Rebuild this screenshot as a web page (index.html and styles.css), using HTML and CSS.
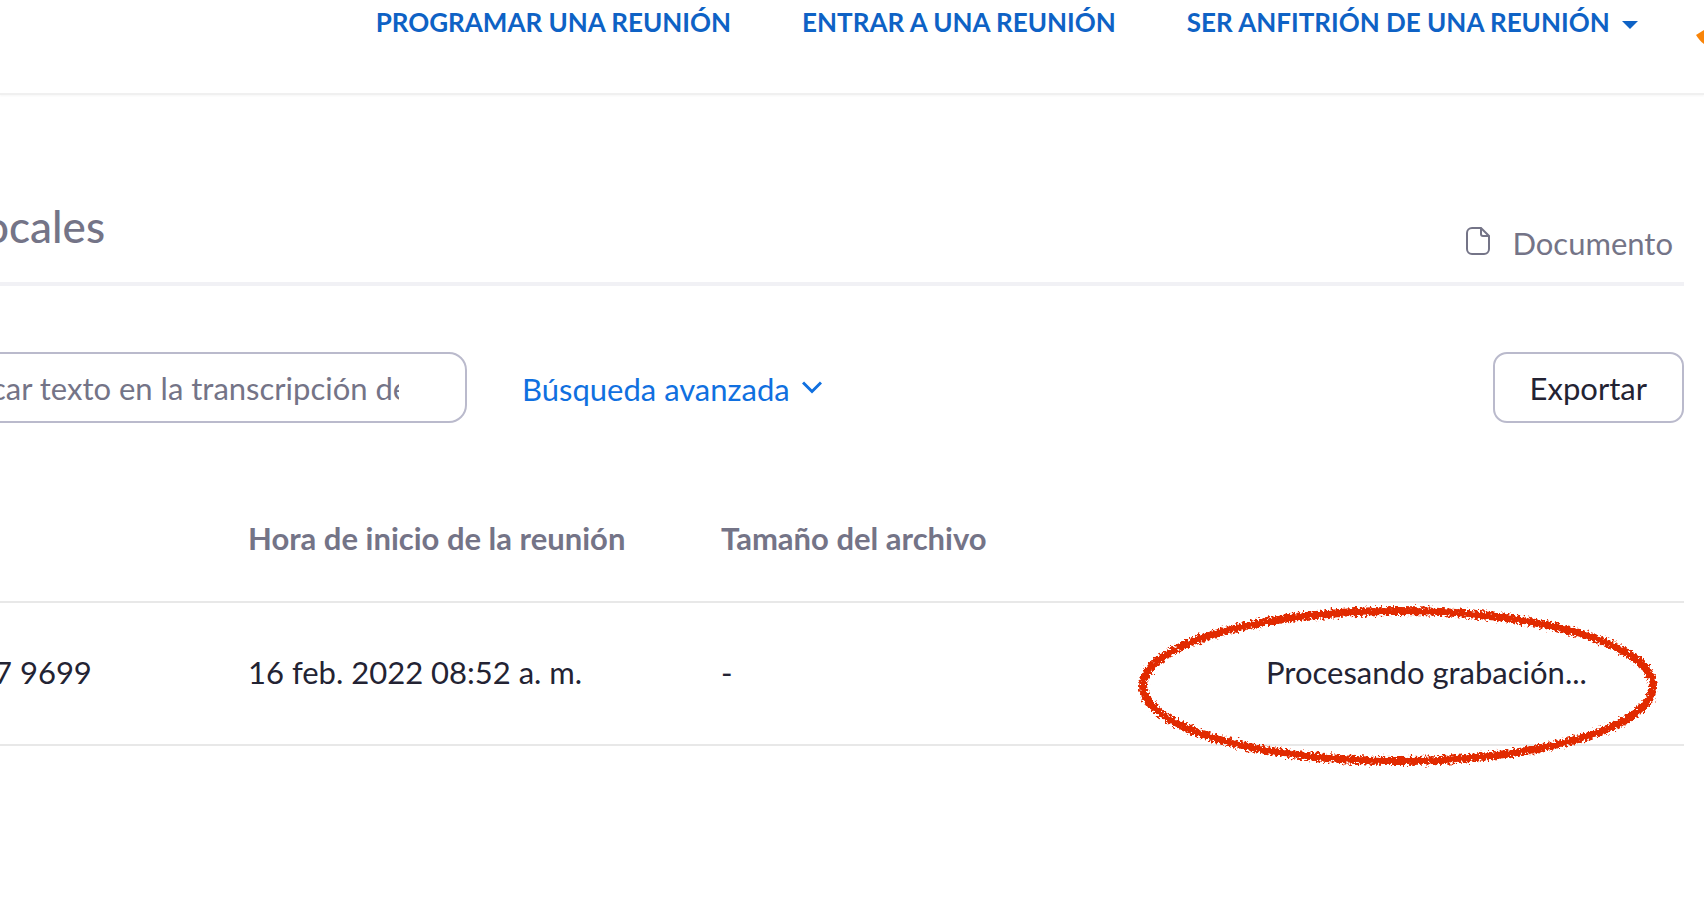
FILE: index.html
```html
<!DOCTYPE html>
<html lang="es">
<head>
<meta charset="utf-8">
<title>Grabaciones</title>
<link rel="stylesheet" href="styles.css">
</head>
<body>
<header class="header">
  <nav class="nav">
    <a class="nav-link" href="#">PROGRAMAR UNA REUNIÓN</a>
    <a class="nav-link" href="#">ENTRAR A UNA REUNIÓN</a>
    <a class="nav-link" href="#">SER ANFITRIÓN DE UNA REUNIÓN
      <svg class="caret" viewBox="0 0 16 8" aria-hidden="true"><path d="M0 0h16L8 8z"/></svg>
    </a>
  </nav>
  <svg class="avatar" viewBox="0 0 8 16" aria-hidden="true"><path d="M8 1L0 6C2 9.500 5 13 8 15z"/></svg>
</header>
<main class="main">
  <div class="title-row">
    <h1 class="title">ocales</h1>
    <a class="doc-link" href="#">
      <svg class="doc-icon" viewBox="0 0 24 28" aria-hidden="true"><path d="M6 1H15L23 9V22a5 5 0 0 1-5 5H6a5 5 0 0 1-5-5V6a5 5 0 0 1 5-5zM15 1V7a2 2 0 0 0 2 2H23"/></svg>
      <span>Documento</span>
    </a>
  </div>
  <div class="toolbar">
    <input class="search" type="text" aria-label="Buscar texto" placeholder="car texto en la transcripción de">
    <a class="advanced" href="#">Búsqueda avanzada
      <svg class="chevron" viewBox="0 0 20 13" aria-hidden="true"><path d="M1 1.500L10 10.500L19 1.500"/></svg>
    </a>
    <button class="export" type="button">Exportar</button>
  </div>
  <table class="table">
    <colgroup><col class="col-id"><col class="col-time"><col><col class="col-state"></colgroup>
    <thead>
      <tr><th></th><th>Hora de inicio de la reunión</th><th>Tamaño del archivo</th><th></th></tr>
    </thead>
    <tbody>
      <tr>
        <td><span class="meeting-id">7 9699</span></td>
        <td>16 feb. 2022 08:52 a. m.</td>
        <td>-</td>
        <td class="state">Procesando grabación...
          <svg class="mark" viewBox="0 0 520 164" aria-hidden="true">
            <defs>
              <filter id="crayon" x="-5%" y="-10%" width="110%" height="120%">
                <feTurbulence type="fractalNoise" baseFrequency="0.4" numOctaves="3" seed="4" result="n"/>
                <feDisplacementMap in="SourceGraphic" in2="n" scale="9" xChannelSelector="R" yChannelSelector="G"/>
              </filter>
            </defs>
            <ellipse cx="260" cy="82" rx="255" ry="75" filter="url(#crayon)"/>
          </svg>
        </td>
      </tr>
    </tbody>
  </table>
</main>
</body>
</html>
```
FILE: styles.css
```css
* { box-sizing: border-box; }
body {
  min-height: 100vh;
  margin: 0;
  background: #fff;
  color: #232333;
  font: 31px/40px Lato, "Open Sans", sans-serif;
}
a { text-decoration: none; }
svg { fill: none; }
.header {
  display: flex;
  justify-content: flex-end;
  height: 95px;
  border-bottom: 2px solid #f0f0f0;
  box-shadow: 0 1px 2px #f6f6f6;
}
.nav { display: flex; gap: 71px; padding: 4px 58px 0 0; }
.nav-link {
  color: #0e62c5;
  font-size: 26px;
  line-height: 36px;
  font-weight: 700;
  white-space: nowrap;
}
.caret { width: 16px; height: 8px; margin-left: 6px; vertical-align: 3px; fill: #0e62c5; }
.avatar { width: 8px; height: 16px; margin-top: 29px; fill: #f98408; }
.main { margin-right: 20px; }
.title-row {
  display: flex;
  justify-content: space-between;
  align-items: flex-start;
  padding: 103px 11px 21px 0;
  border-bottom: 4px solid #f1f1f5;
}
.title {
  margin: 0 0 0 -16px;
  color: #747487;
  font-size: 44px;
  line-height: 56px;
  font-weight: 500;
}
.doc-link {
  display: flex;
  align-items: center;
  gap: 22px;
  padding-top: 27px;
  line-height: 36px;
  color: #747487;
}
.doc-icon { width: 24px; height: 28px; margin-bottom: 4px; stroke: #747487; stroke-width: 2; }
.toolbar { display: flex; align-items: center; margin-top: 66px; }
.search {
  width: 497px;
  height: 71px;
  margin-left: -30px;
  padding: 0 66px 0 19px;
  border: 2px solid #babacc;
  border-radius: 18px;
  background: #fff;
  color: #232333;
  font: inherit;
}
.search::placeholder { color: #747487; opacity: 1; }
.advanced { margin-left: 55px; padding-top: 2px; color: #1070e0; white-space: nowrap; }
.chevron { width: 20px; height: 13px; margin-left: 4px; vertical-align: 7px; stroke: #1070e0; stroke-width: 3; }
.export {
  height: 71px;
  margin-left: auto;
  padding: 0 35px;
  border: 2px solid #babacc;
  border-radius: 14px;
  background: #fff;
  color: #232333;
  font: inherit;
}
.table { width: 100%; margin-top: 84px; border-collapse: collapse; table-layout: fixed; }
.col-id { width: 248px; }
.col-time { width: 473px; }
.col-state { width: 418px; }
.table th, .table td { padding: 0; text-align: left; border-bottom: 2px solid #e8e8e8; white-space: nowrap; }
.table th { padding: 11px 0 43px; color: #747487; font-weight: 700; }
.table td { padding: 49px 0 52px; }
.meeting-id { margin-left: -6px; }
.table .state { position: relative; }
.mark {
  position: absolute;
  left: -128px;
  top: 1px;
  width: 520px;
  height: 164px;
  stroke: #e12a06;
  stroke-width: 8;
}
```
